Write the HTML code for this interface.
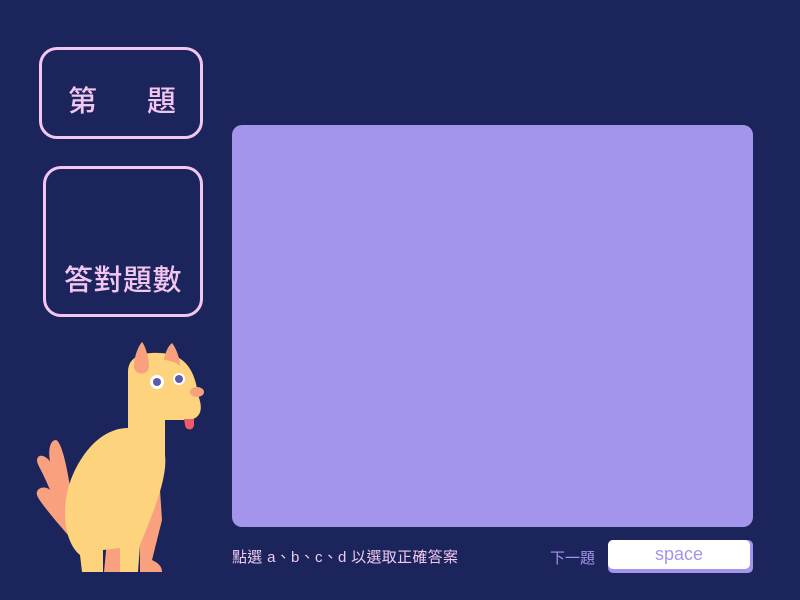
<!DOCTYPE html>
<html><head><meta charset="utf-8"><style>
body{margin:0;width:800px;height:600px;background:#1b245b;position:relative;overflow:hidden;font-family:"Liberation Sans","Noto Sans CJK TC",sans-serif}
.box{position:absolute;border:3px solid #f3c6f1;border-radius:18px;box-sizing:border-box;color:#f3c6f1;font-size:29px;font-weight:500}
.panel{position:absolute;left:232px;top:125px;width:521px;height:402px;background:#a395ec;border-radius:10px}
</style></head><body>
<div class="box" style="left:39px;top:47px;width:164px;height:92px">
<span style="position:absolute;left:26px;top:28px">第</span><span style="position:absolute;left:105px;top:28px">題</span></div>
<div class="box" style="left:43px;top:166px;width:160px;height:151px">
<span style="position:absolute;left:18px;top:88px;letter-spacing:0.5px">答對題數</span></div>
<div class="panel"></div>
<div style="position:absolute;left:232px;top:546px;color:#f0c8f0;font-size:15px;letter-spacing:0.3px">點選 a、b、c、d 以選取正確答案</div>
<div style="position:absolute;left:550px;top:547px;color:#a395ec;font-size:15px">下一題</div>
<div style="position:absolute;left:608px;top:540px;width:145px;height:33px;background:#a395ec;border-radius:5px"></div>
<div style="position:absolute;left:608px;top:540px;width:142px;height:29px;background:#fff;border-radius:5px;color:#a395ec;font-size:18px;text-align:center;line-height:28px">space</div>
<svg style="position:absolute;left:0;top:0" width="800" height="600">
<g fill="#f9a07e">
<path d="M68,535 C55,520 38,500 37,495 C35,488 45,485 50,490 C42,470 37,465 37,460 C38,452 48,457 50,462 C48,450 50,440 56,440 C62,442 68,470 72,500 Z"/>
<path d="M140,490 L160,490 L162,520 L152,560 C158,563 162,566 162,572 L140,572 Z"/>
<path d="M108,530 L128,530 L124,572 L104,572 Z"/>
</g>
<g fill="#fed37d">
<path d="M128,372 C128,355 145,352 160,353 C185,354 195,370 198,395 C204,410 200,418 190,420 L165,420 L165,455 C168,480 150,520 140,545 L138,572 L120,572 L120,548 L103,550 L103,572 L82,572 L80,555 C62,540 60,500 75,470 C90,440 110,428 128,428 Z"/>
</g>
<g fill="#f9a07e">
<path d="M134,366 C134,356 139,345 142,342 C145,345 149,358 149,366 C149,376 134,376 134,366 Z"/>
<path d="M164,360 C165,352 169,345 172,343 C176,348 180,358 180,366 C176,362 168,360 164,360 Z"/>
</g>
<circle cx="157" cy="382" r="7" fill="#fff"/><circle cx="157" cy="382" r="4" fill="#5b5bae"/>
<circle cx="179" cy="379" r="6" fill="#fff"/><circle cx="179" cy="379" r="4" fill="#5b5bae"/>
<ellipse cx="197" cy="392" rx="7" ry="5" fill="#f9a07e"/>
<path d="M184,419 L194,419 L194,425 A4,4 0 0 1 185,425 Z" fill="#ef5a6a"/>
</svg>
</body></html>
